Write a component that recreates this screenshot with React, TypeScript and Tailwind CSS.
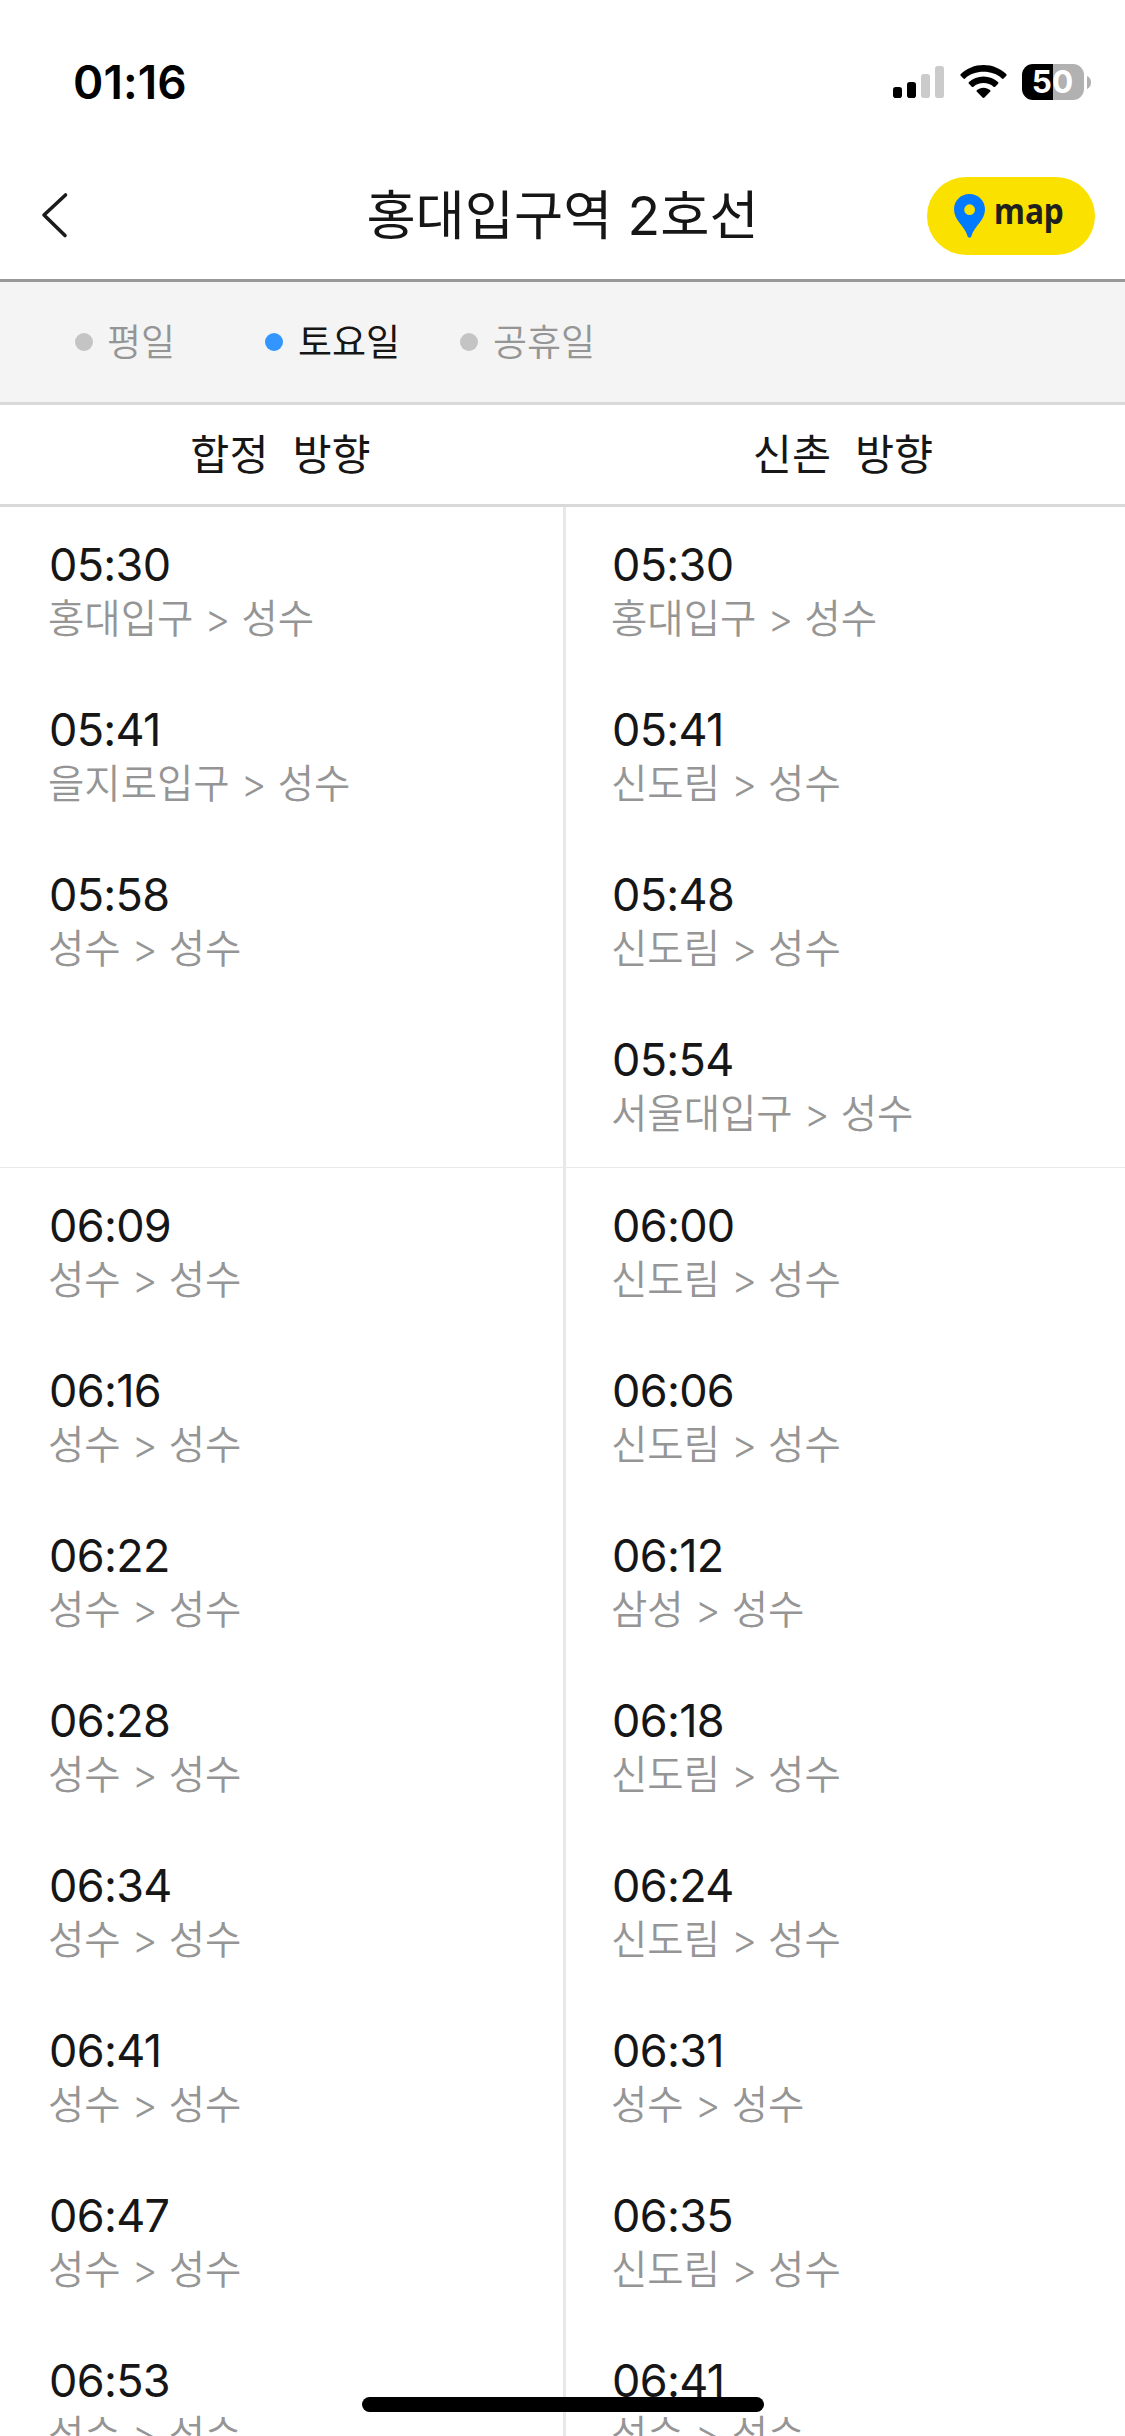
import clsx from 'clsx';

interface Train {
  time: string;
  from: string;
}

interface HourGroup {
  hour: number;
  left: Train[];
  right: Train[];
}

const DESTINATION = '성수';

const days = [
  { label: '평일', active: false, className: 'ml-[75px] w-[190px] gap-[14px]' },
  { label: '토요일', active: true, className: 'w-[195px] gap-[15px]' },
  { label: '공휴일', active: false, className: 'gap-[15px]' },
];

const groups: HourGroup[] = [
  {
    hour: 5,
    left: [
      { time: '05:30', from: '홍대입구' },
      { time: '05:41', from: '을지로입구' },
      { time: '05:58', from: '성수' },
    ],
    right: [
      { time: '05:30', from: '홍대입구' },
      { time: '05:41', from: '신도림' },
      { time: '05:48', from: '신도림' },
      { time: '05:54', from: '서울대입구' },
    ],
  },
  {
    hour: 6,
    left: [
      { time: '06:09', from: '성수' },
      { time: '06:16', from: '성수' },
      { time: '06:22', from: '성수' },
      { time: '06:28', from: '성수' },
      { time: '06:34', from: '성수' },
      { time: '06:41', from: '성수' },
      { time: '06:47', from: '성수' },
      { time: '06:53', from: '성수' },
    ],
    right: [
      { time: '06:00', from: '신도림' },
      { time: '06:06', from: '신도림' },
      { time: '06:12', from: '삼성' },
      { time: '06:18', from: '신도림' },
      { time: '06:24', from: '신도림' },
      { time: '06:31', from: '성수' },
      { time: '06:35', from: '신도림' },
      { time: '06:41', from: '성수' },
    ],
  },
];

function StatusBar() {
  return (
    <div className="flex h-[154px] shrink-0 items-start justify-between pl-[73px] pr-[34px] text-black">
      <span className="mt-[54px] text-[46px] leading-[56px] font-semibold tracking-[0.1px]">01:16</span>
      <div className="mt-[64px] flex h-[36px] items-start">
        {/* Signal */}
        <svg className="mt-[2px] h-[32px] w-[51px]" viewBox="0 0 51 32">
          <rect x="0" y="21" width="9" height="11" rx="2.8" fill="#000" />
          <rect x="14" y="16" width="9" height="16" rx="2.8" fill="#000" />
          <rect x="28" y="8" width="9" height="24" rx="2.8" fill="#cbcbcb" />
          <rect x="42" y="0" width="9" height="32" rx="2.8" fill="#cbcbcb" />
        </svg>
        {/* Wi-Fi */}
        <svg className="mt-px ml-[16px] h-[33px] w-[47px]" viewBox="0 0 47 33">
          <path d="M23.5 0C32.3 0 40.3 3.400 46.200 9C46.800 9.600 46.800 10.200 46.300 10.800L43.600 13.500C43.100 14 42.400 14 41.900 13.500C37.100 9 30.600 6.800 23.500 6.800C16.400 6.800 9.900 9 5.100 13.500C4.600 14 3.900 14 3.400 13.500L.7 10.800C.2 10.200 .2 9.600 .8 9C6.700 3.400 14.700 0 23.500 0Z" />
          <path d="M23.500 11.400C29.200 11.400 34.300 13.500 38 17.100C38.600 17.700 38.600 18.300 38.100 18.800L35.200 21.700C34.700 22.200 34 22.200 33.500 21.700C30.900 19.400 27.400 18.100 23.500 18.100C19.600 18.100 16.100 19.400 13.500 21.700C13 22.200 12.300 22.200 11.800 21.700L8.900 18.800C8.400 18.300 8.400 17.700 9 17.100C12.700 13.500 17.800 11.400 23.500 11.400Z" />
          <path d="M23.500 22.700C26.100 22.700 28.300 23.600 30 25.100C30.600 25.700 30.600 26.300 30.100 26.800L24.500 32.500C23.900 33.100 23.100 33.100 22.500 32.500L16.900 26.800C16.400 26.300 16.400 25.700 17 25.100C18.700 23.600 20.900 22.700 23.500 22.700Z" />
        </svg>
        {/* Battery */}
        <div className="ml-[15px] flex h-[36px] w-[62px] items-center justify-center rounded-[11px] bg-[linear-gradient(90deg,#000_50%,#b1b1b1_50%)] pr-px pb-px text-[31.500px] font-bold text-white">
          50
        </div>
        <svg className="mt-[12px] ml-[3px] h-[13px] w-[4px]" viewBox="0 0 4 13">
          <path d="M0 0C2.500 1 4 3.400 4 6.500S2.500 12 0 13Z" fill="#b1b1b1" />
        </svg>
      </div>
    </div>
  );
}

function Header() {
  return (
    <header className="grid h-[128px] shrink-0 grid-cols-[240px_1fr_240px] items-start border-b-[3px] border-[#999]">
      <button className="mt-[37px] ml-[40px] w-[30px]">
        <svg className="h-[48px] w-[30px]" viewBox="0 0 30 48" fill="none" stroke="#1c1c1c" strokeWidth="3.6" strokeLinecap="round" strokeLinejoin="round">
          <path d="M25.500 4L4 24L25 44.500" />
        </svg>
      </button>
      <h1 className="mt-[23px] text-center text-[53.500px] leading-[78px] whitespace-nowrap">홍대입구역 2호선</h1>
      <button className="mt-[23px] ml-[42px] flex h-[78px] w-[168px] items-start rounded-full bg-[#fae100]">
        <svg className="mt-[17px] ml-[27px] h-[44px] w-[32px]" viewBox="0 0 32 44">
          <path
            fillRule="evenodd"
            fill="#007aff"
            d="M15.500 0C24.300 0 31 6.700 31 15.300C31 27 20 32 17.300 42.500C17 44 14 44 13.700 42.500C11 32 0 27 0 15.300C0 6.700 6.700 0 15.500 0ZM15.600 10.300a5.400 5.400 0 1 0 0 10.800a5.400 5.400 0 1 0 0-10.800Z"
          />
        </svg>
        <span className="mt-[10px] ml-[8px] origin-left scale-x-[0.88] font-['Noto_Sans',sans-serif] text-[36px] leading-[48px] font-bold text-[#1f1f1f]">map</span>
      </button>
    </header>
  );
}

interface TrainListProps {
  trains: Train[];
  className?: string;
}

function TrainList({ trains, className }: TrainListProps) {
  return (
    <ul className={className}>
      {trains.map(({ time, from }) => (
        <li key={time} className="h-[165px] pt-[29px] whitespace-nowrap">
          <div className="pl-px text-[45px] leading-[57px] tracking-[-0.7px]">{time}</div>
          <div className="text-[39.500px] leading-[52px] font-[350] text-[#959595]">
            {from} &gt; {DESTINATION}
          </div>
        </li>
      ))}
    </ul>
  );
}

export default function App() {
  return (
    <div className="relative flex h-[2436px] w-[1125px] flex-col overflow-hidden bg-white font-['Inter','Noto_Sans_CJK_KR',sans-serif] text-[#161616]">
      <StatusBar />
      <Header />

      {/* Day filter */}
      <nav className="flex h-[123px] shrink-0 items-center border-b-[3px] border-[#d9d9d9] bg-[#f4f4f4]">
        {days.map((day) => (
          <button key={day.label} className={clsx('flex items-center text-[37px] leading-[54px]', day.className)}>
            <span className={clsx('size-[18px] rounded-full', day.active ? 'bg-[#3396ff]' : 'bg-[#c4c4c4]')} />
            <span className={clsx('pt-px', day.active ? 'text-[#161616]' : 'font-[350] text-[#959595]')}>{day.label}</span>
          </button>
        ))}
      </nav>

      {/* Directions */}
      <div className="grid h-[102px] shrink-0 grid-cols-[561px_564px] border-b-[3px] border-[#d9d9d9] pt-[2px] text-center text-[42.500px] leading-[96px]">
        <span className="whitespace-pre">합정  방향</span>
        <span className="whitespace-pre">신촌  방향</span>
      </div>

      <div className="flex-1 overflow-hidden">
        {groups.map((group) => (
          <section key={group.hour} className="grid grid-cols-[563px_562px] border-b border-[#e8e8e8]">
            <TrainList trains={group.left} className="pl-[48px]" />
            <TrainList trains={group.right} className="border-l-[3px] border-[#e8e8e8] pl-[45px]" />
          </section>
        ))}
      </div>

      {/* Home indicator */}
      <div className="absolute bottom-[24px] left-[362px] h-[15px] w-[402px] rounded-full bg-black" />
    </div>
  );
}
